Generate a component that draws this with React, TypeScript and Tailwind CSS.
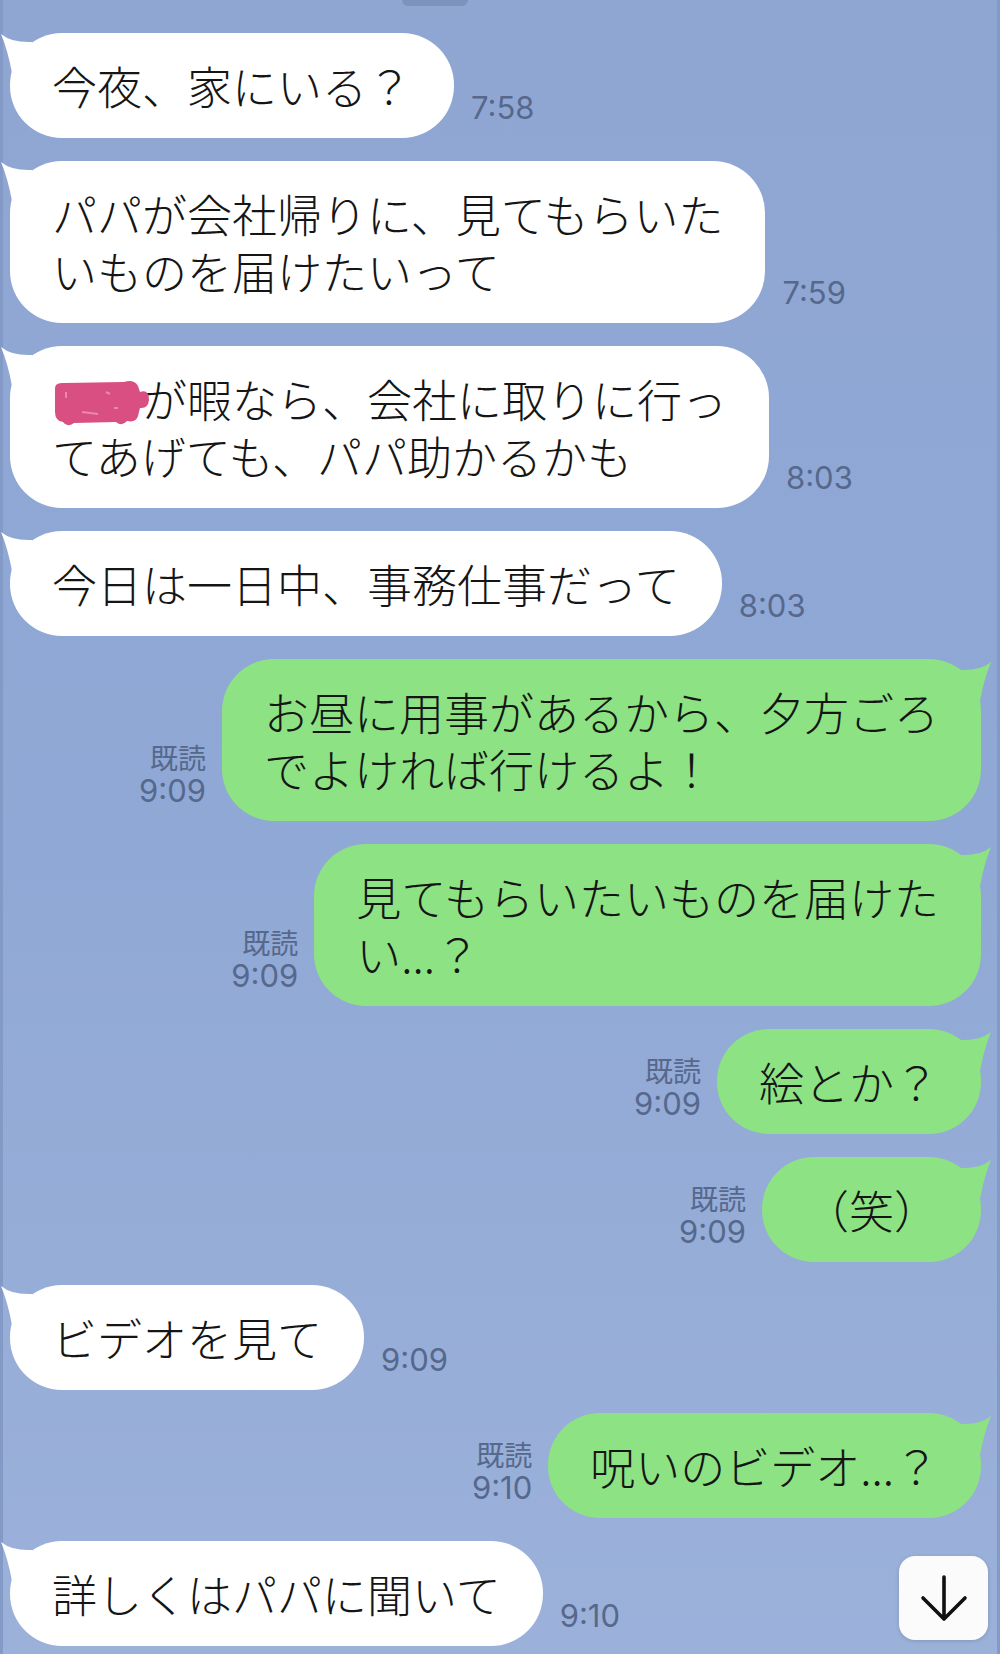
import { Fragment } from "react";
import type { ReactNode } from "react";

type Msg = {
  side: "in" | "out";
  lines: ReactNode[];
  time: string;
};

const jp = "font-['Noto_Sans_CJK_JP','Noto_Sans',sans-serif]";

// pink scribble drawn over a name (name is unreadable in the original)
function Scribble() {
  return (
    <span className="relative inline-block h-[57px] w-[90px] align-top">
      <svg
        className="absolute left-0 top-[8px] h-[50px] w-[100px]"
        viewBox="0 0 100 50"
      >
        <path
          d="M3 12 Q2 4 12 5 L72 4 Q82 1 86 8 L88 14 Q97 11 97 22 Q96 31 88 30 L86 38 Q84 45 75 43 Q70 49 64 44 L22 45 Q15 50 11 44 Q3 43 3 34 Z"
          fill="#d94f82"
        />
        <path
          d="M14 14 L14 20 M30 34 L46 36 M62 30 L66 30 M54 14 L58 16"
          stroke="#e98aac"
          strokeWidth="2"
        />
      </svg>
    </span>
  );
}

const messages: Msg[] = [
  { side: "in", lines: ["今夜、家にいる？"], time: "7:58" },
  {
    side: "in",
    lines: ["パパが会社帰りに、見てもらいた", "いものを届けたいって"],
    time: "7:59",
  },
  {
    side: "in",
    lines: [
      <>
        <Scribble />
        が暇なら、会社に取りに行っ
      </>,
      "てあげても、パパ助かるかも",
    ],
    time: "8:03",
  },
  { side: "in", lines: ["今日は一日中、事務仕事だって"], time: "8:03" },
  {
    side: "out",
    lines: ["お昼に用事があるから、夕方ごろ", "でよければ行けるよ！"],
    time: "9:09",
  },
  {
    side: "out",
    lines: ["見てもらいたいものを届けた", "い...？"],
    time: "9:09",
  },
  { side: "out", lines: ["絵とか？"], time: "9:09" },
  { side: "out", lines: ["（笑）"], time: "9:09" },
  { side: "in", lines: ["ビデオを見て"], time: "9:09" },
  { side: "out", lines: ["呪いのビデオ...？"], time: "9:10" },
  { side: "in", lines: ["詳しくはパパに聞いて"], time: "9:10" },
];

function Tail({ color, flip }: { color: string; flip?: boolean }) {
  return (
    <svg
      className={
        flip
          ? "absolute right-[-11px] top-[2px] h-[40px] w-[42px] -scale-x-100"
          : "absolute left-[-10px] top-0 h-[40px] w-[42px]"
      }
      viewBox="0 0 42 40"
    >
      <path d="M1 1 Q12 10 32 9 L42 40 L12 40 Q8 18 1 1 Z" fill={color} />
    </svg>
  );
}

function Bubble({ msg }: { msg: Msg }) {
  const out = msg.side === "out";
  return (
    <div
      className={`relative whitespace-nowrap rounded-[52px] px-[42px] py-[24px] text-[45px] font-light leading-[57px] text-[#151515] ${jp} ${
        out ? "bg-[#8de283]" : "bg-white"
      }`}
    >
      <Tail color={out ? "#8de283" : "#ffffff"} flip={out} />
      <p className="relative">
        {msg.lines.map((l, i) => (
          <Fragment key={i}>
            {i > 0 && <br />}
            {l}
          </Fragment>
        ))}
      </p>
    </div>
  );
}

const timeCls =
  "mb-[13px] font-['Inter','Liberation_Sans',sans-serif] text-[31px] leading-[34px] text-[#56688c]";

export default function App() {
  return (
    <div className="relative h-[1654px] w-[1000px] overflow-hidden bg-linear-to-b from-[#8fa6d3] via-[#90a8d5] to-[#9bb1da] shadow-[inset_3px_0_0_#8399c6,inset_-3px_0_0_#8399c6]">
      <div className="ml-[402px] h-[6px] w-[66px] rounded-b-[12px] bg-[#7d93bd]" />

      <div className="mt-[27px] flex flex-col gap-[23px]">
        {messages.map((m, i) =>
          m.side === "in" ? (
            <div key={i} className="flex items-end gap-[17px] pl-[10px]">
              <Bubble msg={m} />
              <span className={timeCls}>{m.time}</span>
            </div>
          ) : (
            <div key={i} className="flex items-end justify-end gap-[16px] pr-[19px]">
              <div className={`${timeCls} text-right`}>
                <div className={`${jp} text-[28px]`}>既読</div>
                <div>{m.time}</div>
              </div>
              <Bubble msg={m} />
            </div>
          )
        )}
      </div>

      {/* scroll-to-bottom button */}
      <button className="absolute left-[899px] top-[1556px] flex h-[84px] w-[89px] items-center justify-center rounded-[16px] bg-[#fbfbfb] shadow-[0_1px_4px_rgba(0,0,0,0.15)]">
        <svg width="48" height="48" viewBox="0 0 48 48" fill="none">
          <path
            d="M24 3 V45 M3 24 L24 45 L45 24"
            stroke="#111"
            strokeWidth="3.6"
            strokeLinecap="round"
            strokeLinejoin="round"
          />
        </svg>
      </button>
    </div>
  );
}
